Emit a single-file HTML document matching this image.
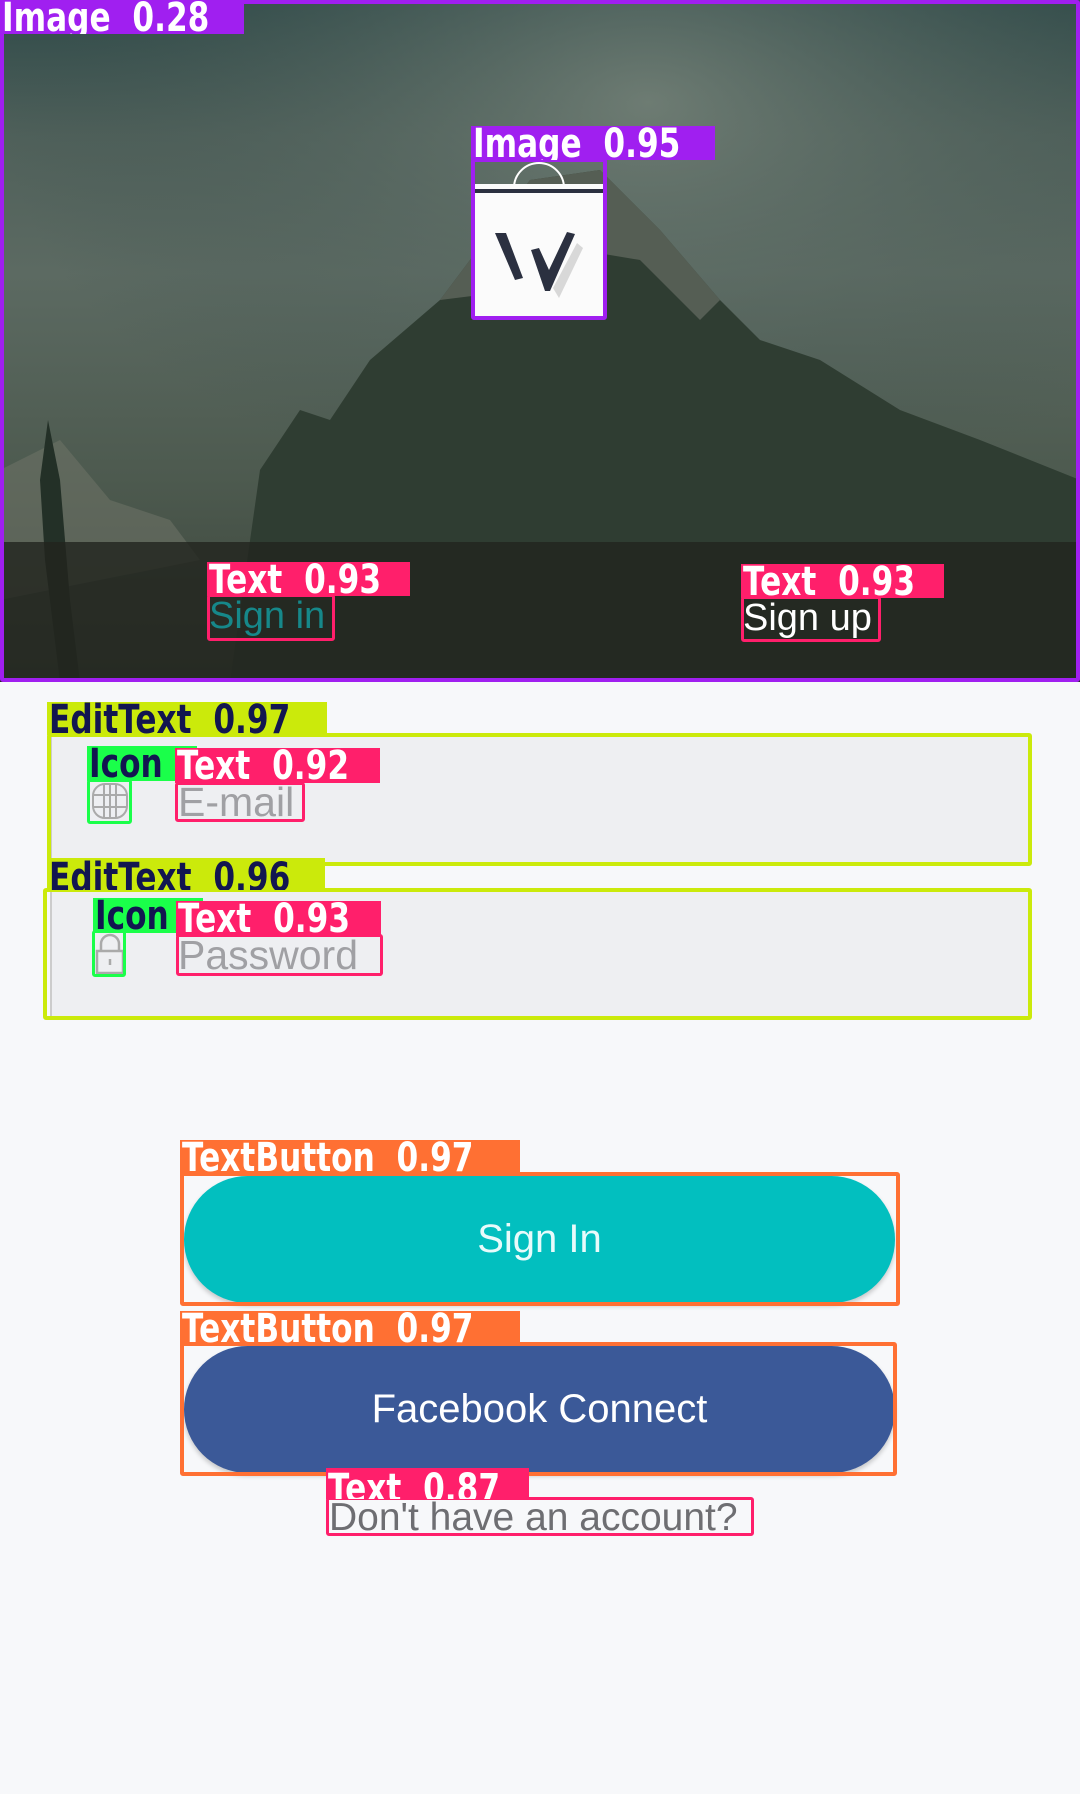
<!DOCTYPE html>
<html><head><meta charset="utf-8"><style>
*{margin:0;padding:0;box-sizing:border-box}
body{width:1080px;height:1794px;background:#f7f8fa;position:relative;overflow:hidden;font-family:"Liberation Sans","DejaVu Sans",sans-serif}
.a{position:absolute}
.lbl{position:absolute;font-family:"DejaVu Sans","Liberation Sans",sans-serif;font-weight:bold;color:#fff;font-size:40px;line-height:36px;white-space:nowrap;padding-left:2px;overflow:hidden}
.lbl span{display:inline-block;transform:scaleX(0.78);transform-origin:0 50%}
.box{position:absolute;border-style:solid;border-radius:3px}
</style></head><body>
<!-- hero -->
<div class="a" style="left:0;top:0;width:1080px;height:682px;overflow:hidden;background:linear-gradient(180deg,#2f4a49 0%,#4f605a 20%,#5c6a62 40%,#4d5a4f 70%,#3a4339 100%)">
<svg class="a" style="left:0;top:0" width="1080" height="682" viewBox="0 0 1080 682">
<defs><radialGradient id="sky" cx="0.6" cy="0.15" r="0.6"><stop offset="0" stop-color="#77847a" stop-opacity="0.8"/><stop offset="1" stop-color="#3b4f4c" stop-opacity="0"/></radialGradient></defs>
<rect width="1080" height="682" fill="url(#sky)"/>
<path d="M0 470 L60 440 L110 500 L170 520 L200 560 L0 600Z" fill="#6d7265" opacity="0.6"/>
<path d="M230 682 L260 470 L300 410 L330 420 L370 360 L440 300 L530 180 L600 170 L660 230 L720 300 L760 340 L820 360 L900 410 L980 440 L1080 480 L1080 682Z" fill="#2f3d32"/>
<path d="M440 300 L530 180 L600 170 L660 230 L720 300 L700 320 L640 260 L580 250 L520 290Z" fill="#5f665d" opacity="0.8"/>
<path d="M60 682 L45 560 L40 480 L48 420 L60 480 L70 600 L80 682Z" fill="#233027"/>
</svg>
<div class="a" style="left:0;top:542px;width:1080px;height:140px;background:rgba(34,36,30,0.8)"></div>
<svg class="a" style="left:471px;top:158px" width="136" height="162" viewBox="0 0 136 162">
<path d="M43 30 A25 25 0 0 1 93 30" fill="none" stroke="#fff" stroke-width="2"/>
<rect x="4" y="26" width="128" height="134" fill="#fbfbfb"/>
<rect x="4" y="31" width="128" height="4" fill="#2b3040"/>
<path d="M24 75 L35 75 L52 120 L44 122Z" fill="#2b3040"/>
<path d="M60 92 L68 90 L78 112 L96 74 L104 76 L79 133 L74 133Z" fill="#2b3040"/>
<path d="M82 130 L106 85 L112 90 L88 140Z" fill="#999" opacity="0.35"/>
</svg>
<div class="a" style="left:209px;top:594px;font-size:38px;color:#16888a;line-height:44px">Sign in</div>
<div class="a" style="left:743px;top:596px;font-size:38px;color:#fff;line-height:44px">Sign up</div>
</div>
<div class="box" style="left:0;top:0;width:1080px;height:682px;border-width:4px;border-color:#a01ff0"></div>
<div class="lbl" style="left:0;top:0;width:244px;height:34px;background:#a01ff0"><span>Image&nbsp; 0.28</span></div>
<div class="box" style="left:471px;top:158px;width:136px;height:162px;border-width:4px;border-color:#a01ff0"></div>
<div class="lbl" style="left:471px;top:126px;width:244px;height:34px;background:#a01ff0"><span>Image&nbsp; 0.95</span></div>
<div class="box" style="left:207px;top:594px;width:128px;height:47px;border-width:3px;border-color:#ff1f6b"></div>
<div class="lbl" style="left:207px;top:562px;width:203px;height:34px;background:#ff1f6b"><span>Text&nbsp; 0.93</span></div>
<div class="box" style="left:741px;top:596px;width:140px;height:46px;border-width:3px;border-color:#ff1f6b"></div>
<div class="lbl" style="left:741px;top:564px;width:203px;height:34px;background:#ff1f6b"><span>Text&nbsp; 0.93</span></div>

<div class="a" style="left:50px;top:736px;width:978px;height:126px;background:#eeeff2;border-left:2px solid #ccc"></div>
<div class="a" style="left:50px;top:891px;width:978px;height:125px;background:#eeeff2;border-left:2px solid #ccc"></div>
<svg class="a" style="left:90px;top:781px" width="40" height="40" viewBox="0 0 40 40" fill="none" stroke="#aaa" stroke-width="2">
<rect x="3" y="3" width="34" height="34" rx="12"/><path d="M3 14H37M3 26H37M14 3V37M26 3V37M20 3V37"/></svg>
<svg class="a" style="left:95px;top:933px" width="30" height="42" viewBox="0 0 30 42" fill="none" stroke="#aaa" stroke-width="2.5">
<path d="M6 18V11A9 9 0 0 1 24 11V18"/><rect x="2" y="18" width="26" height="22" fill="#eeeff2"/><path d="M15 26V32"/></svg>
<div class="a" style="left:178px;top:780px;font-size:41px;color:#a0a0a4;line-height:44px">E-mail</div>
<div class="a" style="left:178px;top:933px;font-size:41px;color:#a0a0a4;line-height:44px">Password</div>
<div class="box" style="left:47px;top:733px;width:985px;height:133px;border-width:4px;border-color:#cbea0b"></div>
<div class="lbl" style="left:47px;top:702px;width:280px;height:33px;background:#cbea0b;color:#121650"><span>EditText&nbsp; 0.97</span></div>
<div class="box" style="left:43px;top:888px;width:989px;height:132px;border-width:4px;border-color:#cbea0b"></div>
<div class="lbl" style="left:47px;top:858px;width:278px;height:32px;background:#cbea0b;color:#121650;line-height:40px"><span>EditText&nbsp; 0.96</span></div>
<div class="box" style="left:87px;top:779px;width:45px;height:45px;border-width:3px;border-color:#1aff4a"></div>
<div class="lbl" style="left:87px;top:746px;width:110px;height:35px;background:#1aff4a;color:#121650"><span>Icon</span></div>
<div class="box" style="left:92px;top:930px;width:34px;height:47px;border-width:3px;border-color:#1aff4a"></div>
<div class="lbl" style="left:93px;top:898px;width:110px;height:35px;background:#1aff4a;color:#121650"><span>Icon</span></div>
<div class="box" style="left:175px;top:782px;width:130px;height:40px;border-width:3px;border-color:#ff1f6b"></div>
<div class="lbl" style="left:175px;top:748px;width:205px;height:35px;background:#ff1f6b"><span>Text&nbsp; 0.92</span></div>
<div class="box" style="left:176px;top:934px;width:207px;height:42px;border-width:3px;border-color:#ff1f6b"></div>
<div class="lbl" style="left:176px;top:901px;width:205px;height:35px;background:#ff1f6b"><span>Text&nbsp; 0.93</span></div>

<div class="a" style="left:184px;top:1176px;width:711px;height:127px;border-radius:64px;background:#02bfbf;box-shadow:0 3px 5px rgba(0,0,0,0.2);color:#e8fbfb;font-size:40px;text-align:center;line-height:127px">Sign In</div>
<div class="a" style="left:184px;top:1346px;width:711px;height:127px;border-radius:64px;background:#3b5998;box-shadow:0 3px 5px rgba(0,0,0,0.2);color:#fff;font-size:40px;text-align:center;line-height:127px">Facebook Connect</div>
<div class="box" style="left:180px;top:1172px;width:720px;height:134px;border-width:4px;border-color:#ff7033"></div>
<div class="lbl" style="left:180px;top:1140px;width:340px;height:35px;background:#ff7033"><span>TextButton&nbsp; 0.97</span></div>
<div class="box" style="left:180px;top:1342px;width:717px;height:134px;border-width:4px;border-color:#ff7033"></div>
<div class="lbl" style="left:180px;top:1311px;width:340px;height:34px;background:#ff7033"><span>TextButton&nbsp; 0.97</span></div>
<div class="a" style="left:329px;top:1498px;font-size:39px;color:#6e6e72;line-height:40px;white-space:nowrap">Don't have an account?</div>
<div class="box" style="left:326px;top:1497px;width:428px;height:39px;border-width:3px;border-color:#ff1f6b"></div>
<div class="lbl" style="left:326px;top:1468px;width:203px;height:31px;background:#ff1f6b;line-height:42px"><span>Text&nbsp; 0.87</span></div>
</body></html>
